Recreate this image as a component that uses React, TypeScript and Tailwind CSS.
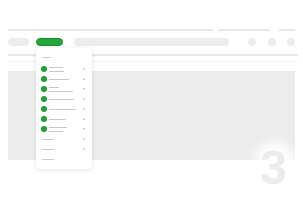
import React from "react";

const Item = ({ lines }: { lines: number[] }) => (
  <div className="h-[10px] flex items-center pl-[5px] pr-[7px]">
    <div className="w-[6px] h-[6px] rounded-full bg-[#1f9e33] shrink-0" />
    <div className="ml-[2px] flex flex-col gap-[3px] flex-1">
      {lines.map((w, i) => (
        <div key={i} className="h-[1px] bg-[#c8c8c8]" style={{ width: w }} />
      ))}
    </div>
    <div className="w-[2px] h-[2px] rounded-full bg-[#c8c8c8] shrink-0" />
  </div>
);

const TextRow = ({ dot }: { dot: boolean }) => (
  <div className="h-[10px] flex items-center pl-[6px] pr-[7px]">
    <div className="h-[1px] w-[12px] bg-[#c8c8c8]" />
    <div className="flex-1" />
    {dot && <div className="w-[2px] h-[2px] rounded-full bg-[#c8c8c8]" />}
  </div>
);

export default function App() {
  return (
    <div className="relative w-[303px] h-[200px] bg-white overflow-hidden px-[8px] pt-[29px]">
      <div className="flex h-[2px]">
        <div className="w-[207px] bg-[#e8e8e8]" />
        <div className="ml-[5px] w-[53px] bg-[#e8e8e8]" />
        <div className="ml-[9px] w-[16px] bg-[#e8e8e8]" />
      </div>
      <div className="mt-[7px] flex items-center h-[8px]">
        <div className="w-[21px] h-[8px] rounded-full bg-[#ececec]" />
        <div className="ml-[7px] w-[27px] h-[8px] rounded-full bg-[#22a73a] border border-[#1a8f2f]" />
        <div className="ml-[11px] w-[155px] h-[8px] rounded-full bg-[#ececec]" />
        <div className="ml-[19px] w-[8px] h-[8px] rounded-full bg-[#ececec]" />
        <div className="ml-[12px] w-[8px] h-[8px] rounded-full bg-[#ececec]" />
        <div className="ml-[11px] w-[8px] h-[8px] rounded-full bg-[#ececec]" />
      </div>
      <div className="mt-[8px] h-[2px] w-[290px] bg-[#e8e8e8]" />
      <div className="mt-[5px] h-[1px] w-[290px] bg-[#f0f0f0]" />
      <div className="mt-[9px] w-[287px] h-[89px] bg-[#ececec]" />

      <div className="absolute left-[36px] top-[48px] w-[56px] h-[121px] bg-white rounded-[2px] shadow-[0_1px_4px_rgba(0,0,0,0.12)] pt-[5px]">
        <div className="h-[8px] flex items-center pl-[6px]">
          <div className="h-[1px] w-[9px] bg-[#cfcfcf]" />
        </div>
        <div className="mt-[3px]">
          <Item lines={[14, 15]} />
          <Item lines={[20]} />
          <Item lines={[10, 24]} />
          <Item lines={[25]} />
          <Item lines={[27]} />
          <Item lines={[17]} />
          <Item lines={[18, 14]} />
          <TextRow dot />
          <TextRow dot />
          <TextRow dot={false} />
        </div>
      </div>

      <div className="absolute left-[248px] top-[136px] w-[54px] h-[48px] bg-[radial-gradient(closest-side,white_40%,rgba(255,255,255,0)_100%)]" />
      <div className="absolute left-[260px] top-[144px] text-[48px] leading-none font-bold text-[#ebebeb] font-['Liberation_Sans',sans-serif]">
        3
      </div>
    </div>
  );
}
